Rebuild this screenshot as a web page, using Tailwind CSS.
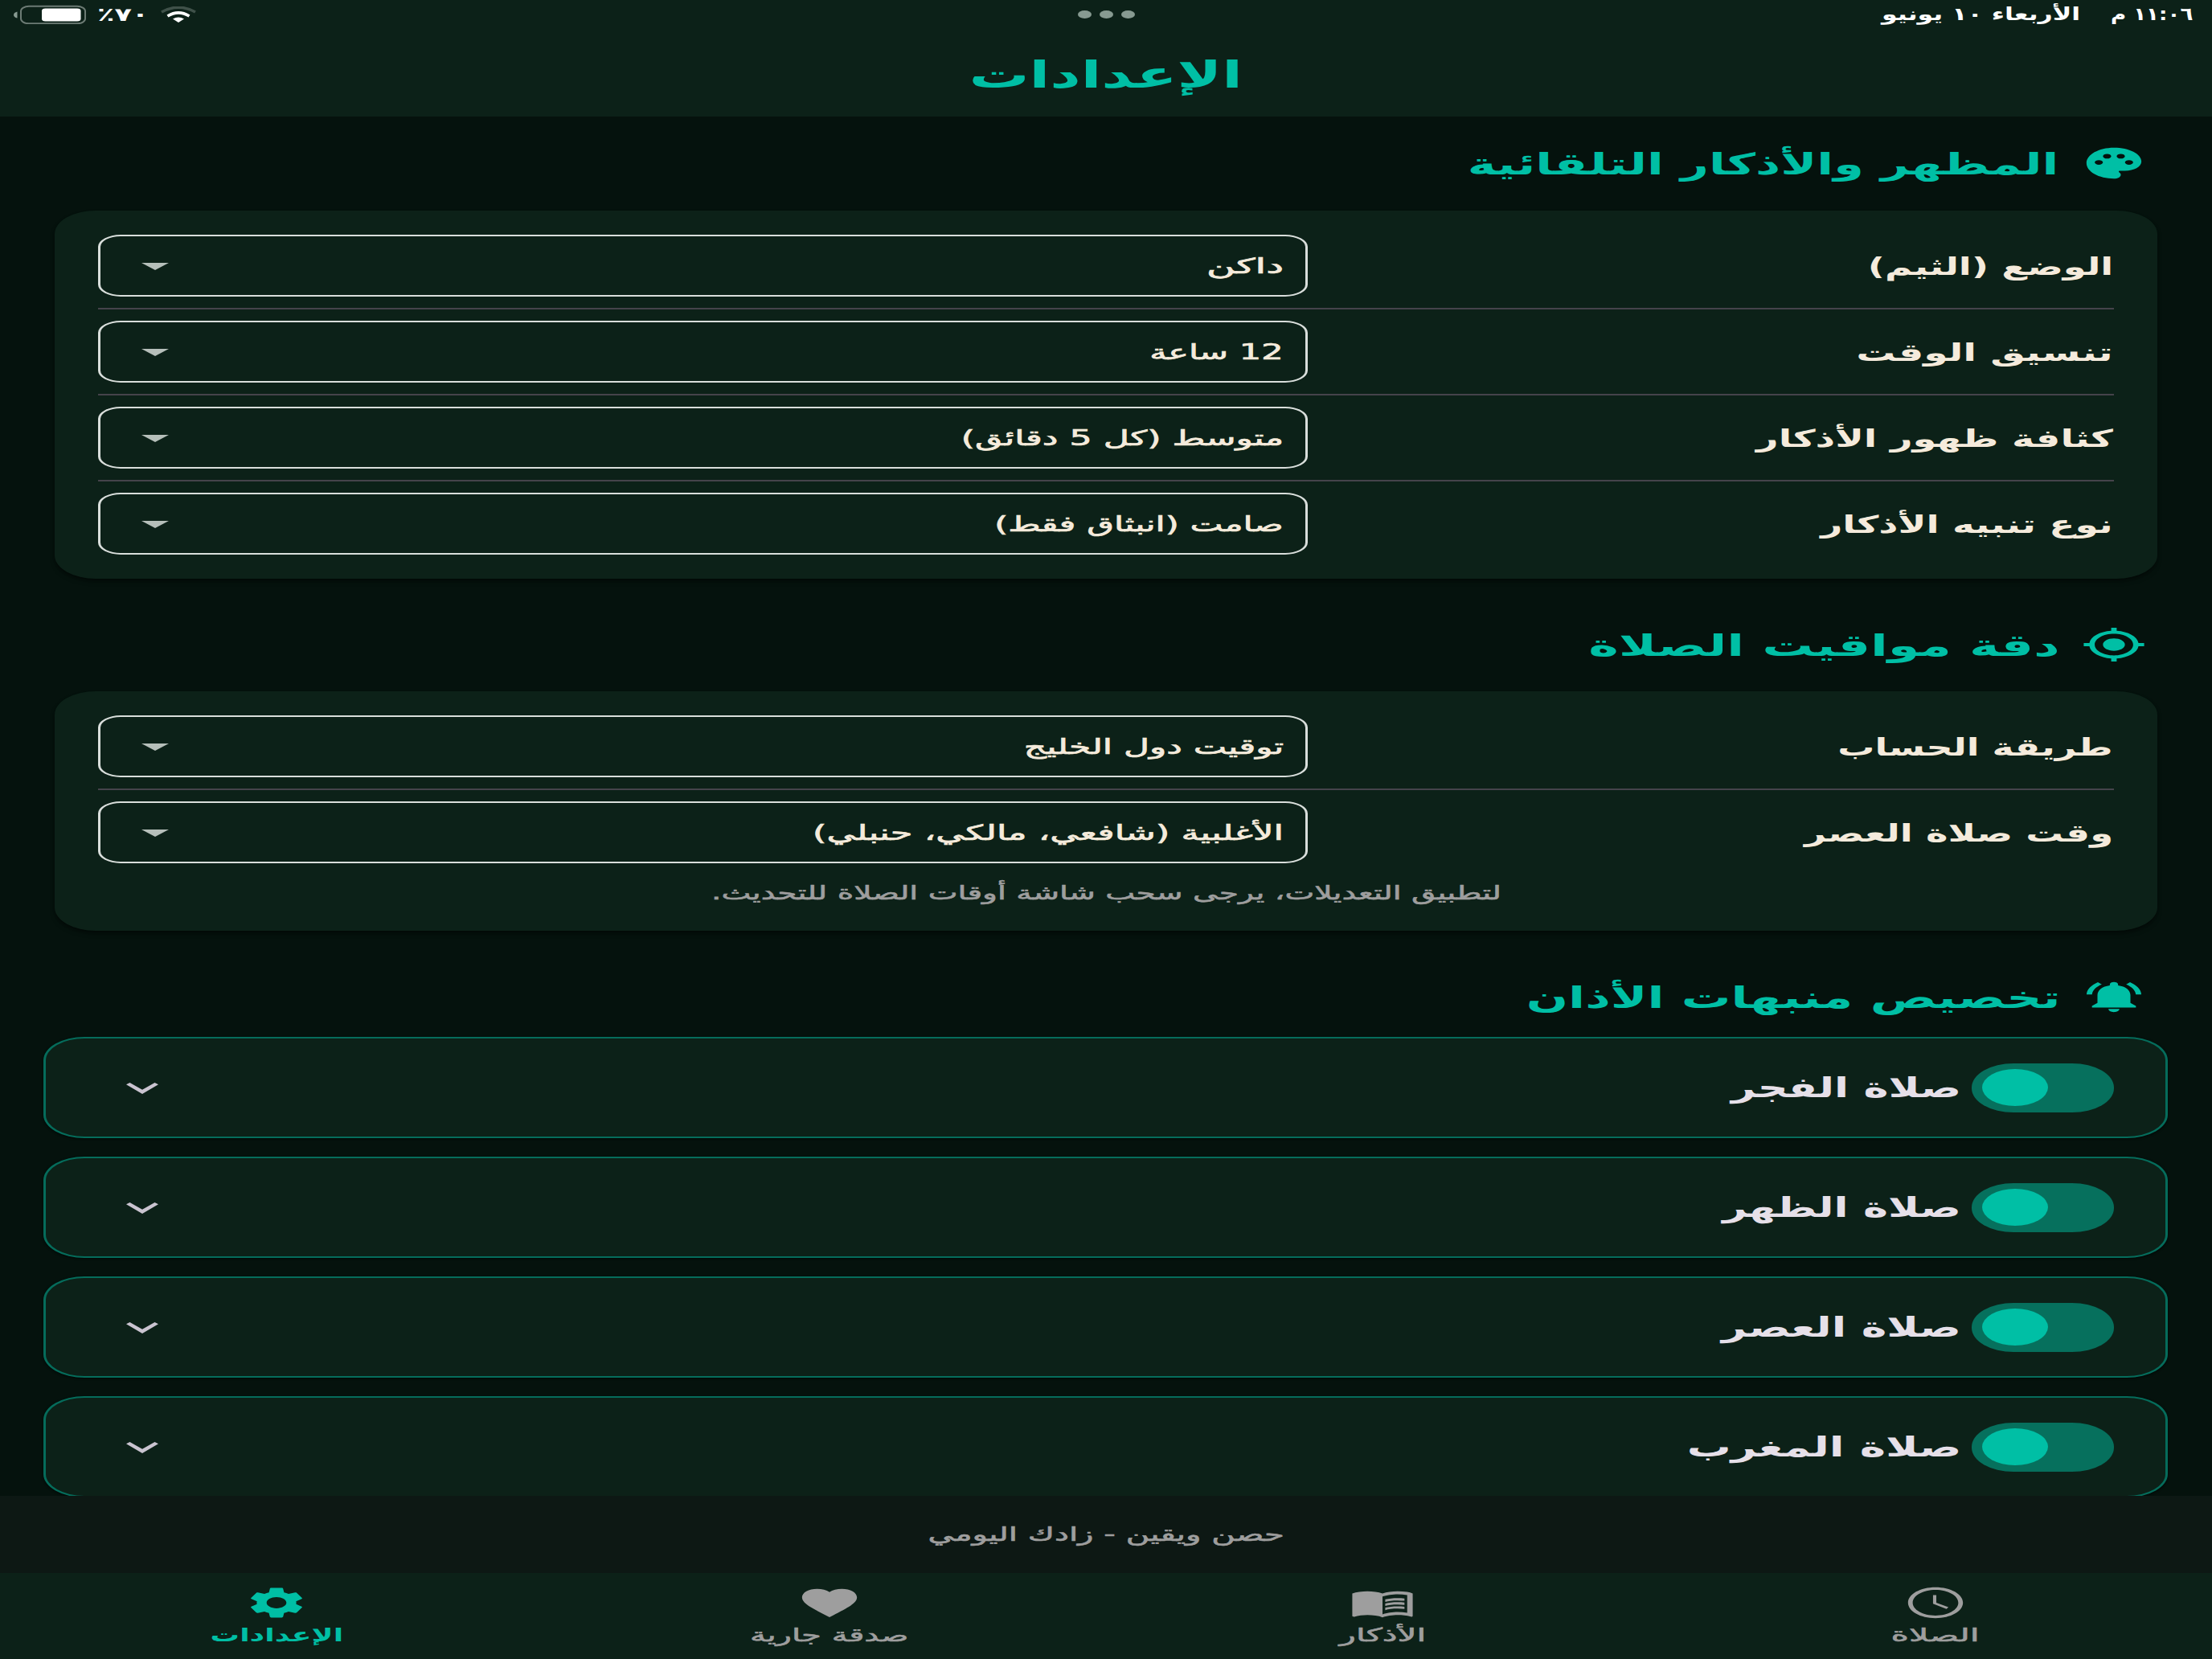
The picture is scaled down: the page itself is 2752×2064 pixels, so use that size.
<!DOCTYPE html>
<html lang="ar" dir="rtl">
    <head>
        <meta charset="UTF-8">
        <meta name="viewport" content="width=device-width, initial-scale=1.0">
        <title>الإعدادات</title>
        <script src="https://cdn.jsdelivr.net/npm/@tailwindcss/browser@4"></script>
    </head>
    <body class="flex h-[2064px] w-[2752px] flex-col overflow-hidden bg-[#05120d] font-['DejaVu_Sans',sans-serif] leading-none text-[#f5ebdc]">

        <!-- Header -->
        <header class="flex h-[145px] shrink-0 flex-col bg-[#0c2118]">
            <div class="grid h-[38px] grid-cols-3 items-center px-6 text-[22px] font-bold text-white">
                <div class="flex items-center gap-[38px]">
                    <div class="flex w-[102px]"><span data-w="102" class="origin-right whitespace-nowrap">١١:٠٦ م</span></div>
                    <span data-w="247" class="origin-right whitespace-nowrap">الأربعاء ١٠ يونيو</span>
                </div>
                <div class="flex justify-center gap-[10px]">
                    <div class="h-[10px] w-[17px] rounded-[50%] bg-[#879a91]"></div>
                    <div class="h-[10px] w-[17px] rounded-[50%] bg-[#879a91]"></div>
                    <div class="h-[10px] w-[17px] rounded-[50%] bg-[#879a91]"></div>
                </div>
                <div dir="ltr" class="-ml-2 flex items-center">
                    <svg class="h-[24px] w-[92px]" viewBox="0 0 92 24">
                        <path d="M5.500 8.500Q1 9.500 1 12.500T5.500 16.500Z" fill="#879a91"/>
                        <rect x="10" y="1.800" width="80" height="21.500" rx="10" ry="6" fill="none" stroke="#6c7b74" stroke-width="2"/>
                        <rect x="36" y="4.500" width="48.500" height="16" rx="4.500" ry="3" fill="#fff"/>
                    </svg>
                    <div class="ml-[13px] flex w-[62px]"><span data-w="64" class="origin-left whitespace-nowrap text-[23px]">٪٧٠</span></div>
                    <svg class="ml-[16px] h-[20px] w-[46px]" viewBox="0 0 46 20">
                        <path d="M2 7Q23 -4.500 44 7" fill="none" stroke="#3f5149" stroke-width="3.600"/>
                        <path d="M9.500 12Q23 3.800 36.500 12" fill="none" stroke="#fff" stroke-width="3.600"/>
                        <path d="M16 15.500Q23 11.500 30 15.500L23 20Z" fill="#fff"/>
                    </svg>
                </div>
            </div>
            <div class="flex h-[111px] items-center justify-center pt-[4px]">
                <h1 data-w="340" class="whitespace-nowrap text-[46px] font-bold text-[#00bfa5]">الإعدادات</h1>
            </div>
        </header>

        <!-- Settings -->
        <main class="flex-1 overflow-hidden">
            <div class="flex h-[117px] items-start gap-[28px] pt-[35px] pr-[81px] text-[#00bfa5]">
                <svg class="h-[46px] w-[82px]" viewBox="0 0 24 24" preserveAspectRatio="none" fill="currentColor"><path d="M12 2C6.49 2 2 6.49 2 12s4.49 10 10 10c1.38 0 2.500-1.120 2.500-2.500 0-.61-.23-1.200-.64-1.670-.08-.1-.13-.21-.13-.33 0-.28.22-.5.5-.5H16c3.310 0 6-2.690 6-6 0-4.960-4.490-9-10-9zm5.500 11c-.83 0-1.500-.67-1.500-1.500s.67-1.500 1.500-1.500 1.500.67 1.500 1.500-.67 1.500-1.500 1.500zm-3-4c-.83 0-1.500-.67-1.500-1.500S13.670 6 14.500 6s1.500.67 1.500 1.500S15.330 9 14.500 9zM5 11.500c0-.83.67-1.500 1.500-1.500s1.500.67 1.500 1.500S7.330 13 6.500 13 5 12.330 5 11.500zm6-4c0 .83-.67 1.500-1.500 1.500S8 8.330 8 7.500 8.670 6 9.500 6s1.500.67 1.500 1.500z"/></svg>
                <h2 data-w="735" class="origin-right whitespace-nowrap pt-[6px] text-[37px] font-bold">المظهر والأذكار التلقائية</h2>
            </div>
            <section id="appearance" class="mx-[68px] flex h-[458px] flex-col rounded-[51px/29px] bg-[#0c2118] px-[54px] pt-[30px] shadow-md shadow-black/40"></section>

            <div class="flex h-[140px] items-start gap-[26px] pt-[59px] pr-[81px] text-[#00bfa5]">
                <svg class="h-[46px] w-[82px]" viewBox="0 0 24 24" preserveAspectRatio="none" fill="currentColor"><path d="M12 8c-2.210 0-4 1.790-4 4s1.790 4 4 4 4-1.790 4-4-1.790-4-4-4zm8.940 3c-.46-4.170-3.770-7.480-7.940-7.940V1h-2v2.060C6.830 3.520 3.520 6.830 3.060 11H1v2h2.060c.46 4.170 3.770 7.480 7.940 7.940V23h2v-2.060c4.170-.46 7.480-3.770 7.940-7.940H23v-2h-2.060zM12 19c-3.870 0-7-3.130-7-7s3.130-7 7-7 7 3.130 7 7-3.130 7-7 7z"/></svg>
                <h2 data-w="587" class="origin-right whitespace-nowrap pt-[6px] text-[37px] font-bold">دقة مواقيت الصلاة</h2>
            </div>
            <section class="mx-[68px] h-[298px] rounded-[51px/29px] bg-[#0c2118] px-[54px] pt-[30px] shadow-md shadow-black/40">
                <div id="calculation" class="flex flex-col"></div>
                <p class="flex justify-center pt-[25px] text-[24px] text-[#9e9e9e]"><span data-w="983" class="whitespace-nowrap [-webkit-text-stroke:0.6px_#9e9e9e]">لتطبيق التعديلات، يرجى سحب شاشة أوقات الصلاة للتحديث.</span></p>
            </section>

            <div class="flex h-[132px] items-start gap-[26px] pt-[59px] pr-[81px] text-[#00bfa5]">
                <svg class="h-[46px] w-[82px]" viewBox="0 0 24 24" preserveAspectRatio="none" fill="currentColor"><path d="M7.580 4.080L6.150 2.650C3.750 4.480 2.170 7.300 2.030 10.500h2c.15-2.650 1.510-4.970 3.550-6.420zm12.390 6.420h2c-.15-3.200-1.730-6.020-4.120-7.850l-1.420 1.430c2.020 1.450 3.390 3.770 3.540 6.420zM18 11c0-3.070-1.640-5.640-4.500-6.320V4c0-.83-.67-1.500-1.500-1.500s-1.500.67-1.500 1.500v.68C7.630 5.360 6 7.920 6 11v5l-2 2v1h16v-1l-2-2v-5zm-6 11c.14 0 .27-.01.4-.04.65-.14 1.180-.58 1.440-1.180.1-.24.15-.5.15-.78h-4c.01 1.100.9 2 2.010 2z"/></svg>
                <h2 data-w="664" class="origin-right whitespace-nowrap pt-[6px] text-[37px] font-bold">تخصيص منبهات الأذان</h2>
            </div>
            <section id="prayers" class="flex flex-col gap-[23px] pr-[55px] pl-[54px]"></section>
        </main>

        <!-- Tagline -->
        <div class="flex h-[96px] shrink-0 items-center justify-center bg-[#0d1814] text-[24px] text-[#9e9e9e]">
            <span data-w="443" class="whitespace-nowrap [-webkit-text-stroke:0.6px_#9e9e9e]">حصن ويقين - زادك اليومي</span>
        </div>

        <!-- Bottom navigation -->
        <nav class="grid h-[107px] shrink-0 grid-cols-4 bg-[#0c2118] pt-[14px] text-[23px] text-[#9e9e9e]">
            <a class="flex flex-col items-center gap-[6px]">
                <svg class="h-[46px] w-[82px]" viewBox="0 0 24 24" preserveAspectRatio="none" fill="currentColor"><path d="M11.990 2C6.470 2 2 6.480 2 12s4.470 10 9.990 10C17.520 22 22 17.520 22 12S17.520 2 11.990 2zM12 20.300c-4.580 0-8.300-3.720-8.300-8.300S7.420 3.700 12 3.700s8.300 3.720 8.300 8.300-3.720 8.300-8.300 8.300zM12.300 7h-1.200v5.700l4.900 3.300.7-1.100-4.400-2.900z"/></svg>
                <span data-w="110" class="whitespace-nowrap [-webkit-text-stroke:0.6px_#9e9e9e]">الصلاة</span>
            </a>
            <a class="flex flex-col items-center gap-[6px]">
                <svg class="h-[46px] w-[82px]" viewBox="0 0 24 24" preserveAspectRatio="none" fill="currentColor"><path d="M21 5c-1.110-.35-2.330-.5-3.500-.5-1.950 0-4.050.4-5.500 1.500-1.450-1.100-3.550-1.500-5.500-1.500S2.450 4.900 1 6v14.650c0 .25.25.5.5.5.1 0 .15-.05.25-.05C3.100 20.450 5.050 20 6.500 20c1.950 0 4.050.4 5.500 1.500 1.350-.85 3.800-1.500 5.500-1.500 1.650 0 3.350.3 4.750 1.050.1.05.15.05.25.05.25 0 .5-.25.5-.5V6c-.6-.45-1.250-.75-2-1zm0 13.500c-1.100-.35-2.300-.5-3.500-.5-1.700 0-4.150.65-5.500 1.500V8c1.350-.85 3.800-1.500 5.500-1.500 1.200 0 2.400.15 3.500.5v11.500z"/><path d="M17.500 10.500c.88 0 1.730.09 2.500.26V9.240c-.79-.15-1.640-.24-2.500-.24-1.700 0-3.240.29-4.500.83v1.660c1.130-.64 2.700-.99 4.500-.99zM13 12.490v1.660c1.130-.64 2.700-.99 4.500-.99.88 0 1.730.09 2.500.26V11.900c-.79-.15-1.640-.24-2.500-.24-1.700 0-3.240.3-4.500.83zM17.500 14.330c-1.700 0-3.240.29-4.500.83v1.660c1.130-.64 2.700-.99 4.500-.99.88 0 1.730.09 2.500.26v-1.520c-.79-.16-1.640-.24-2.500-.24z"/></svg>
                <span data-w="108" class="whitespace-nowrap [-webkit-text-stroke:0.6px_#9e9e9e]">الأذكار</span>
            </a>
            <a class="flex flex-col items-center gap-[6px]">
                <svg class="h-[46px] w-[82px]" viewBox="0 0 24 24" preserveAspectRatio="none" fill="currentColor"><path d="M12 21.350l-1.450-1.320C5.400 15.360 2 12.280 2 8.500 2 5.420 4.420 3 7.500 3c1.740 0 3.410.81 4.500 2.090C13.090 3.810 14.760 3 16.500 3 19.580 3 22 5.420 22 8.500c0 3.780-3.400 6.860-8.550 11.540L12 21.350z"/></svg>
                <span data-w="197" class="whitespace-nowrap [-webkit-text-stroke:0.6px_#9e9e9e]">صدقة جارية</span>
            </a>
            <a class="flex flex-col items-center gap-[6px] text-[#00bfa5]">
                <svg class="h-[46px] w-[82px]" viewBox="0 0 24 24" preserveAspectRatio="none" fill="currentColor"><path d="M19.140 12.940c.04-.3.06-.61.06-.94 0-.32-.02-.64-.07-.94l2.030-1.580c.18-.14.23-.41.12-.61l-1.920-3.320c-.12-.22-.37-.29-.59-.22l-2.390.96c-.5-.38-1.030-.7-1.620-.94l-.36-2.540c-.04-.24-.24-.41-.48-.41h-3.840c-.24 0-.43.17-.47.41l-.36 2.540c-.59.24-1.130.57-1.620.94l-2.390-.96c-.22-.08-.47 0-.59.22L2.740 8.870c-.12.21-.08.47.12.61l2.030 1.580c-.05.3-.09.63-.09.94s.02.64.07.94l-2.030 1.580c-.18.14-.23.41-.12.61l1.920 3.320c.12.22.37.29.59.22l2.390-.96c.5.38 1.030.7 1.620.94l.36 2.540c.05.24.24.41.48.41h3.840c.24 0 .44-.17.47-.41l.36-2.540c.59-.24 1.130-.56 1.620-.94l2.390.96c.22.08.47 0 .59-.22l1.920-3.320c.12-.22.07-.47-.12-.61l-2.010-1.580zM12 15.600c-1.980 0-3.600-1.620-3.600-3.600s1.620-3.600 3.600-3.600 3.600 1.620 3.600 3.600-1.620 3.600-3.600 3.600z"/></svg>
                <span data-w="166" class="whitespace-nowrap font-bold">الإعدادات</span>
            </a>
        </nav>

        <script>
            // label, label width, selected option, option width
            const appearance = [
                ['الوضع (الثيم)', 305, 'داكن', 96],
                ['تنسيق الوقت', 320, '12 ساعة', 167],
                ['كثافة ظهور الأذكار', 444, 'متوسط (كل 5 دقائق)', 401],
                ['نوع تنبيه الأذكار', 364, 'صامت (انبثاق فقط)', 360]
            ];
            const calculation = [
                ['طريقة الحساب', 343, 'توقيت دول الخليج', 323],
                ['وقت صلاة العصر', 384, 'الأغلبية (شافعي، مالكي، حنبلي)', 586]
            ];
            const prayers = [
                ['صلاة الفجر', 286],
                ['صلاة الظهر', 297],
                ['صلاة العصر', 298],
                ['صلاة المغرب', 341]
            ];

            const divider = '<div class="my-[14px] h-[2px] bg-[#45434b]"></div>';

            function selectRow([label, labelWidth, value, valueWidth]) {
                return `
                    <div class="flex h-[77px] items-center justify-between">
                        <span data-w="${labelWidth}" class="mt-[2px] mr-px origin-right whitespace-nowrap text-[30px] font-bold">${label}</span>
                        <div class="flex h-[77px] w-[1505px] shrink-0 items-center justify-between rounded-[28px/15px] border-x-[3px] border-y-2 border-[#d9dedb] pr-[27px] pl-[51px]">
                            <span data-w="${valueWidth}" class="origin-right whitespace-nowrap text-[26px] [-webkit-text-stroke:0.7px_#f5ebdc]">${value}</span>
                            <svg class="mt-[2px] h-[9px] w-[34px]" viewBox="0 0 34 9" fill="#b6bfba"><path d="M0 0h34L17 9z"/></svg>
                        </div>
                    </div>
                `;
            }

            document.getElementById('appearance').innerHTML = appearance.map(selectRow).join(divider);
            document.getElementById('calculation').innerHTML = calculation.map(selectRow).join(divider);

            document.getElementById('prayers').innerHTML = prayers.map(([name, width]) => `
                <div class="flex h-[126px] shrink-0 items-center rounded-[51px/29px] border-x-[3px] border-y-2 border-[#056c5b] bg-[#0c2118] pr-[64px] pl-[100px] shadow-sm shadow-black/50">
                    <div class="flex h-[61px] w-[177px] items-center justify-end rounded-[52px/30px] bg-[#06705d] pl-[13px]">
                        <div class="h-[46px] w-[82px] rounded-[50%] bg-[#00bfa5]"></div>
                    </div>
                    <span data-w="${width}" class="mr-[13px] origin-right whitespace-nowrap text-[34px] font-bold text-[#e6e0e9]">${name}</span>
                    <svg class="mt-[2px] mr-auto h-[14px] w-[40px]" viewBox="0 0 40 14" fill="#cac4d0"><path d="M4.500 0L20 8.700 35.500 0 40 2.300 20 14 0 2.300z"/></svg>
                </div>
            `).join('');

            // Stretch every text horizontally to its own width, again whenever its natural size changes
            function fit(el) {
                if (el.offsetWidth > 0) {
                    el.style.transform = `scaleX(${el.dataset.w / el.offsetWidth})`;
                }
            }
            const observer = new ResizeObserver(entries => entries.forEach(entry => fit(entry.target)));
            document.querySelectorAll('[data-w]').forEach(el => observer.observe(el));
            window.addEventListener('load', () => document.querySelectorAll('[data-w]').forEach(fit));
        </script>
    </body>
</html>
